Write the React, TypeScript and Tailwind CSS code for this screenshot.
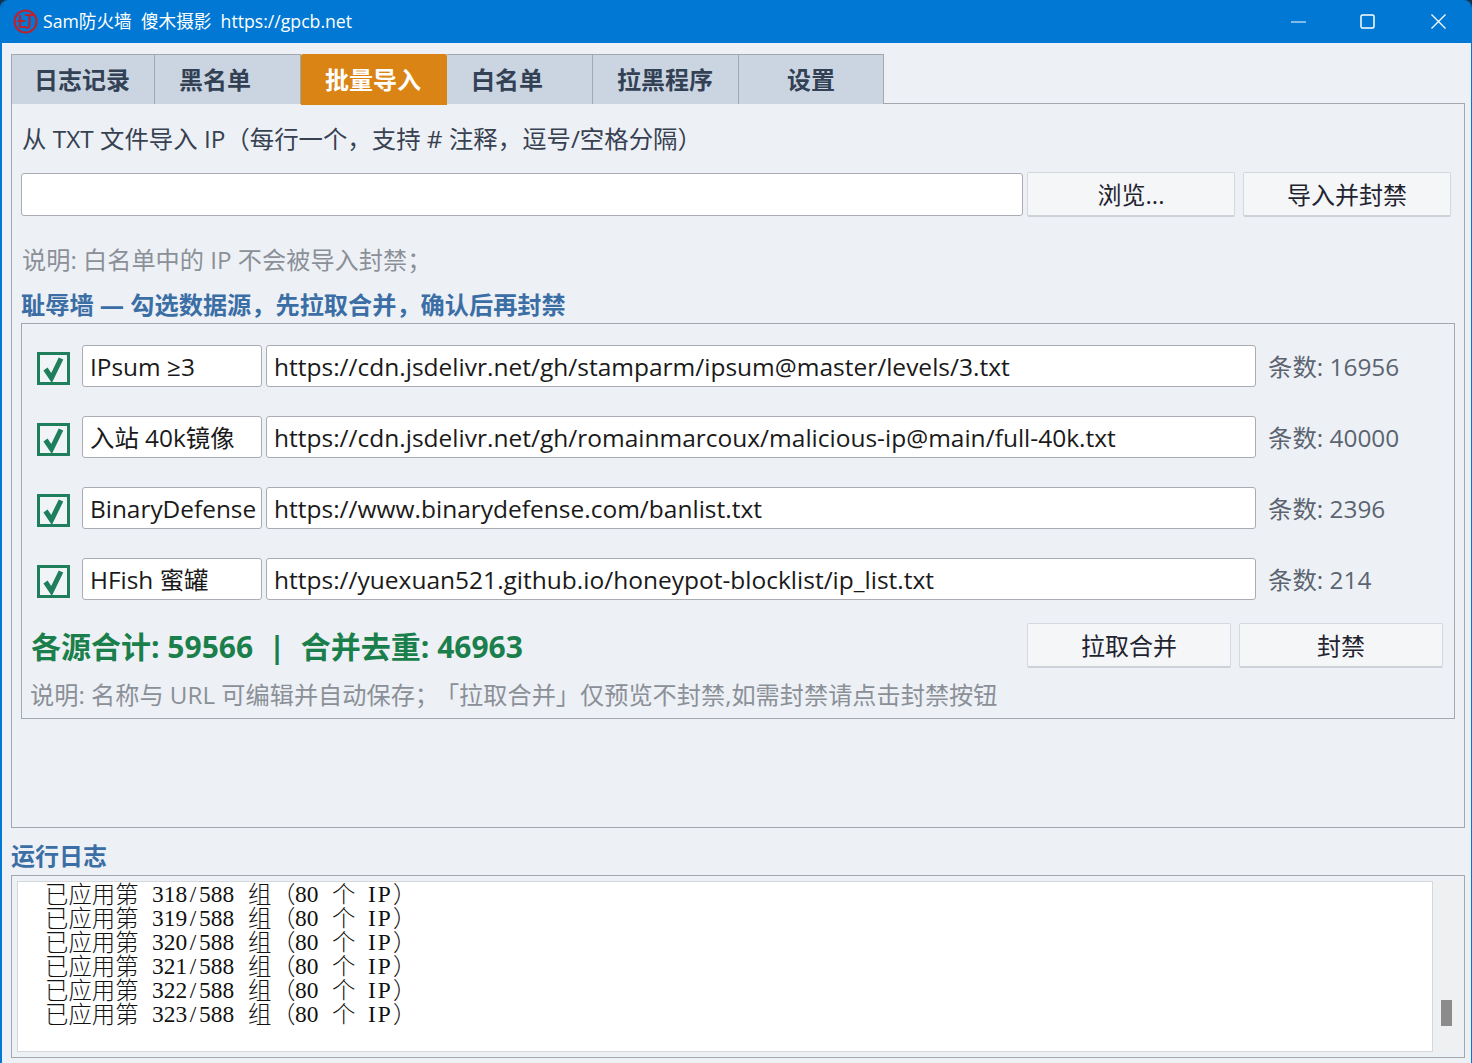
const sans = 'font-["Open_Sans","Noto_Sans_CJK_SC",sans-serif]';

const sources = [
  { name: 'IPsum ≥3', url: 'https://cdn.jsdelivr.net/gh/stamparm/ipsum@master/levels/3.txt', count: 16956 },
  { name: '入站 40k镜像', url: 'https://cdn.jsdelivr.net/gh/romainmarcoux/malicious-ip@main/full-40k.txt', count: 40000 },
  { name: 'BinaryDefense', url: 'https://www.binarydefense.com/banlist.txt', count: 2396 },
  { name: 'HFish 蜜罐', url: 'https://yuexuan521.github.io/honeypot-blocklist/ip_list.txt', count: 214 },
];

const tabs = ['日志记录', '黑名单', '批量导入', '白名单', '拉黑程序', '设置'];
const logLines = [318, 319, 320, 321, 322, 323];

function Logo() {
  return (
    <svg width="25" height="25" viewBox="0 0 25 25" fill="none" stroke="#b9232f" strokeWidth="2.2">
      <circle cx="12.5" cy="12.5" r="11" />
      <path d="M7 6v12h6M4 12h8M12 6h8M16.5 6v10c0 2-1 3-3.500 3" />
    </svg>
  );
}

function Check() {
  return (
    <div className="mt-[4px] w-[33px] h-[33px] border-[3px] border-[#1f7f5c] bg-[#f0f4f7] flex items-center justify-center shrink-0">
      <svg width="27" height="27" viewBox="0 0 27 27" fill="none">
        <path d="M5.500 14l6 9L21 3.500" stroke="#1f7f5c" strokeWidth="5" />
      </svg>
    </div>
  );
}

function Btn({ label, className }: { label: string; className: string }) {
  return (
    <button className={`pt-[2px] bg-[#f5f6f8] border border-[#d5d9df] border-b-2 border-b-[#cdd2d9] rounded-[2px] text-[24px] text-[#1f2430] ${className}`}>
      {label}
    </button>
  );
}

function LogLine({ n }: { n: number }) {
  const serif = 'font-["Liberation_Serif",serif]';
  return (
    <div className="h-[24px] flex items-center whitespace-pre text-[#111] text-[23.4px] leading-[24px] font-light">
      <span className="w-[107px]">已应用第</span>
      <span className={`${serif} w-[35px]`}>{n}</span>
      <span className={`${serif} w-[12px] text-center`}>/</span>
      <span className={`${serif} w-[49px]`}>588</span>
      <span className="w-[24px]">组</span>
      <span className="w-[23px]">（</span>
      <span className={`${serif} w-[37px]`}>80</span>
      <span className="w-[36px]">个</span>
      <span className={`${serif} w-[25px] tracking-[2px]`}>IP</span>
      <span className="w-[24px]">）</span>
    </div>
  );
}

export default function App() {
  return (
    <div className={`w-[1472px] h-[1063px] bg-[#16324f] overflow-hidden ${sans}`}>
      <div className="h-full flex flex-col rounded-t-lg overflow-hidden border-l-2 border-r border-[#0078d4]">
        {/* title bar */}
        <div className="h-[43px] bg-[#0078d4] flex items-center text-white shrink-0 pl-[11px]">
          <Logo />
          <span className="ml-[5px] text-[17.65px]">Sam防火墙&nbsp; 傻木摄影&nbsp; https://gpcb.net</span>
          <div className="ml-auto flex items-center">
            <svg width="15" height="2" viewBox="0 0 15 2"><path d="M0 1h15" stroke="#fff" strokeWidth="1" /></svg>
            <svg className="ml-[54px]" width="15" height="15" viewBox="0 0 15 15" fill="none"><rect x="1" y="1" width="13" height="13" rx="1.5" stroke="#fff" strokeWidth="1.500" /></svg>
            <svg className="ml-[56px] mr-[25px]" width="15" height="15" viewBox="0 0 15 15" fill="none"><path d="M0.500 0.500l14 14M14.500 0.500l-14 14" stroke="#fff" strokeWidth="1.300" /></svg>
          </div>
        </div>

        <div className="flex-1 bg-[#edf1f6] pl-[9px] pr-[6px] pt-[11px] flex flex-col min-h-0">
          {/* tabs */}
          <div className="flex h-[50px] shrink-0 relative z-10 -mb-px">
            {tabs.map((t, i) =>
              i === 2 ? (
                <div key={t} className="w-[146px] h-[51px] bg-[#da8416] text-white font-bold text-[24px] flex items-center pl-[24px] rounded-t-[2px]">{t}</div>
              ) : i === 5 ? (
                <div key={t} className="w-[145px] bg-[#cbd5e1] text-[#334155] font-bold text-[24px] flex items-center justify-center border border-[#a3a8ae] border-b-0 border-l-0">{t}</div>
              ) : (
                <div key={t} className="w-[146px] first:w-[144px] first:pl-[22px] bg-[#cbd5e1] text-[#334155] font-bold text-[24px] flex items-center pl-[24px] border border-[#a3a8ae] border-b-0 border-l-0 first:border-l">{t}</div>
              )
            )}
          </div>

          {/* pane */}
          <div className="h-[725px] shrink-0 border border-[#a3a8ae] px-[9px] flex flex-col">
            <div className="h-[68px] flex items-center pt-[2px] text-[24.4px] text-[#374151] pl-px whitespace-nowrap">
              从 TXT 文件导入 IP（每行一个，支持 # 注释，逗号/空格分隔）
            </div>
            <div className="flex items-start h-[45px]">
              <div className="mt-px w-[1002px] h-[43px] bg-white border border-[#a9adb3] rounded-[3px]" />
              <Btn label="浏览..." className="ml-[4px] w-[208px] h-[45px]" />
              <Btn label="导入并封禁" className="ml-[8px] w-[208px] h-[45px]" />
            </div>
            <div className="mt-[25px] h-[36px] flex items-center text-[24.2px] text-[#8b9098] pl-[1px]">说明: 白名单中的 IP 不会被导入封禁；</div>
            <div className="mt-[9px] h-[36px] flex items-center text-[24.2px] font-bold text-[#3b6ea5]">耻辱墙 — 勾选数据源，先拉取合并，确认后再封禁</div>

            {/* sources box */}
            <div className="w-[1434px] h-[396px] border border-[#a3a8ae] flex flex-col pl-[15px] pt-[21px]">
              {sources.map(s => (
                <div key={s.name} className="flex items-center h-[42px] mb-[29px]">
                  <Check />
                  <div className="ml-[12px] w-[180px] h-[42px] pt-[2px] bg-white border border-[#a9adb3] rounded-[3px] flex items-center pl-[7px] text-[24.4px] text-[#1a1a1a] whitespace-nowrap">{s.name}</div>
                  <div className="ml-[4px] w-[990px] h-[42px] pt-[2px] bg-white border border-[#a9adb3] rounded-[3px] flex items-center pl-[7px] text-[24.5px] text-[#1a1a1a] whitespace-nowrap">{s.url}</div>
                  <span className="ml-[12px] pt-[2px] text-[24.4px] text-[#5b6470] whitespace-nowrap">条数: {s.count}</span>
                </div>
              ))}
              <div className="flex items-center h-[45px] -mt-[6px] -ml-[6px]">
                <span className="pt-[2px] text-[30px] font-bold text-[#1a7f4b] whitespace-pre">各源合计: 59566  |  合并去重: 46963</span>
                <Btn label="拉取合并" className="ml-auto w-[204px] h-[45px]" />
                <Btn label="封禁" className="ml-[8px] mr-[11px] w-[204px] h-[45px]" />
              </div>
              <div className="mt-[9px] -ml-[7px] text-[24.2px] text-[#8b9098] whitespace-nowrap">说明: 名称与 URL 可编辑并自动保存；<span className="ml-[8px]">「拉取合并」仅预览不封禁,如需封禁请点击封禁按钮</span></div>
            </div>
          </div>

          {/* log */}
          <div className="h-[47px] flex items-center text-[24px] font-bold text-[#3b6ea5] shrink-0 pt-[8px]">运行日志</div>
          <div className="w-[1454px] h-[183px] border border-[#a3a8ae] flex p-[5px] pr-[2px] shrink-0">
            <div className="w-[1416px] h-full bg-white border border-[#d4d8dd] pl-[27px] overflow-hidden">
              {logLines.map(n => <LogLine key={n} n={n} />)}
            </div>
            <div className="flex-1 bg-[#eef0f2] relative">
              <div className="absolute left-[8px] top-[119px] w-[11px] h-[26px] bg-[#8c8c8c]" />
            </div>
          </div>
        </div>
      </div>
    </div>
  );
}
